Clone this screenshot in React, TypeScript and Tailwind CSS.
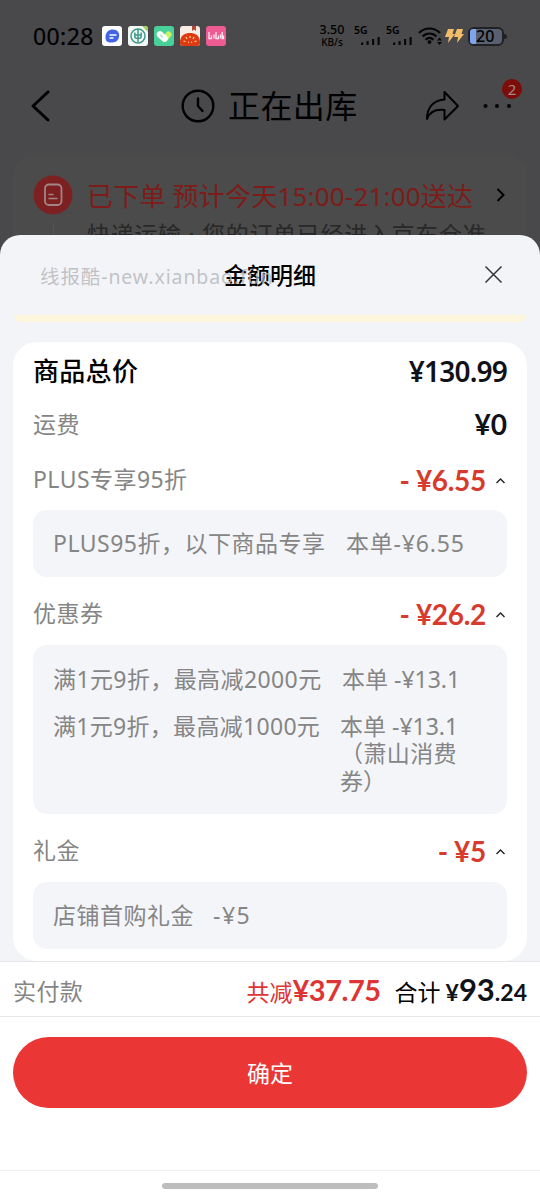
import type { ReactNode } from "react";

const base = "font-['Noto_Sans','Noto_Sans_CJK_SC',sans-serif]";

function StatusBar() {
  return (
    <div className="flex h-[72px] items-center pl-[33px] pr-[33px]">
      <span className="w-[69px] whitespace-nowrap text-[23px] font-normal leading-none tracking-[0.4px] [-webkit-text-stroke:0.2px_black]">00:28</span>
      <div className="flex gap-[6px]">
        <svg width="20" height="20" viewBox="0 0 20 20">
          <rect width="20" height="20" rx="3" fill="#fff" />
          <path d="M3.500 12C3 6 7 3.500 11 3.500s7 3 6 7.500-4 5.500-8 5.500S3.800 15 3.500 12Z" fill="#4364e4" />
          <path d="M7.500 9h7M7.500 12h4" stroke="#fff" strokeWidth="1.300" />
        </svg>
        <svg width="20" height="20" viewBox="0 0 20 20">
          <rect width="20" height="20" rx="3" fill="#f4f8f5" />
          <path d="M14 0h3a3 3 0 0 1 3 3v3Z" fill="#9bd05b" />
          <circle cx="10" cy="10" r="7" fill="none" stroke="#3d998a" strokeWidth="1.500" />
          <path d="M10 3v13M6.800 6.500v4q0 2 3.200 2t3.200-2v-4M7.500 9h5" fill="none" stroke="#3d998a" strokeWidth="1.500" />
        </svg>
        <svg width="20" height="20" viewBox="0 0 20 20">
          <rect width="20" height="20" rx="3" fill="#4ad19a" />
          <path d="m11 12.500 3.500-4" stroke="#c7f36b" strokeWidth="6" strokeLinecap="round" />
          <path d="m6 8.500 4.500 4" fill="none" stroke="#fff" strokeWidth="6.500" strokeLinecap="round" />
          <path d="m6.500 9 2 2" stroke="#a5e6cc" strokeWidth="1.200" strokeLinecap="round" />
        </svg>
        <svg width="20" height="20" viewBox="0 0 20 20">
          <rect width="20" height="20" rx="3" fill="#f6eee4" />
          <path d="M0 15C1 9 5 7 10 7s9 2 10 8v2a3 3 0 0 1-3 3H3a3 3 0 0 1-3-3Z" fill="#df3b12" />
          <path d="M12 0h4v5l-2-1.500L12 5Z" fill="#b44a35" />
          <path d="M10 10v2M6 11l1 2M14 11l-1 2M3.500 15l2 .5M16.500 15l-2 .5M8 16l1 .5M12 16l-1 .5" stroke="#ffd49a" strokeWidth="1.200" />
        </svg>
        <svg width="20" height="20" viewBox="0 0 20 20">
          <rect width="20" height="20" rx="3" fill="#ee5b93" />
          <path d="M3 6v6.500h2.500V9.500M8 8.500v4M10 6v6.500h2.500V9.500M14.500 8.500v4M16.200 6v6.500h1.300V9.500" fill="none" stroke="#ffe9f2" strokeWidth="1.300" />
        </svg>
      </div>
      <div className="ml-auto flex shrink-0 items-center">
        <div className="mr-[9px] w-[26px] text-center font-medium">
          <div className="text-[12.500px] leading-[12px]">3.50</div>
          <div className="whitespace-nowrap text-[10px] leading-[12px]">KB/s</div>
        </div>
        <Signal />
        <Signal />
        <svg width="26" height="22" viewBox="0 0 26 22" fill="none" stroke="#050505" strokeWidth="2.200">
          <path d="M1 8C7 2 16 2 22 8M4.500 11.500c4-4 10-4 14 0M7.500 14.800c2.500-2.500 5.500-2.500 8 0" />
          <circle cx="11.500" cy="17" r="1.500" fill="#050505" strokeWidth="1" />
          <path d="m19 15.500 2.500-3 2.500 3ZM19 17l2.500 3 2.500-3Z" fill="#050505" stroke="none" />
        </svg>
        <svg className="ml-[1px]" width="20" height="16" viewBox="0 0 20 16" fill="#f2bd68">
          <path d="M3 1h6L7.500 6H10L3 15l1-6H0ZM12 1h6l-1.500 5H19l-7 9 1-6H9Z" />
        </svg>
        <div className="ml-[3px] flex items-center">
          <div className="flex h-[19px] w-[36px] rounded-[6px] border-2 border-[#202124] bg-[#596070]">
            <div className="h-full w-[6px] rounded-l-[3px] bg-[#7ea4ed]" />
            <span className="text-[16px] font-medium leading-[15px]">20</span>
          </div>
          <div className="h-[5px] w-[3px] rounded-r bg-[#202124]" />
        </div>
      </div>
    </div>
  );
}

function Signal() {
  return (
    <div className="flex h-[21px] w-[32px] flex-col">
      <span className="text-[10.500px] font-semibold leading-[9px]">5G</span>
      <svg className="ml-[6px]" width="21" height="11" viewBox="0 0 21 11" fill="#080808">
        <rect x="1" y="7.500" width="2.200" height="2.500" />
        <rect x="6.500" y="6" width="2.200" height="4" />
        <rect x="12" y="4" width="2.200" height="6" />
        <rect x="17.500" y="2" width="2.200" height="8" />
      </svg>
    </div>
  );
}

function NavBar() {
  return (
    <div className="flex h-[68px] items-center pl-[29px] pr-[26px]">
      <svg width="22" height="34" viewBox="0 0 22 34" fill="none" stroke="#000" strokeWidth="3" strokeLinecap="round" strokeLinejoin="round">
        <path d="M19 3 4 17l15 14" />
      </svg>
      <svg className="ml-[130px]" width="34" height="34" viewBox="0 0 34 34" fill="none" stroke="#000" strokeWidth="2.400" strokeLinecap="round" strokeLinejoin="round">
        <circle cx="17" cy="17" r="15.300" />
        <path d="M17 9.500V17l4.500 5" />
      </svg>
      <span className="ml-[13px] w-[132px] whitespace-nowrap text-[32px] font-normal leading-none tracking-[0.4px]">正在出库</span>
      <svg className="ml-[65px]" width="36" height="34" viewBox="0 0 36 34" fill="none" stroke="#000" strokeWidth="2" strokeLinejoin="round">
        <path d="M19.500 3 33 17 19.500 30.500V21C11 20 4.500 23 2 30 2 18 9 11 19.500 10.500Z" />
      </svg>
      <div className="relative ml-auto h-[34px] w-[31px]">
        <svg width="31" height="34" viewBox="0 0 31 34">
          <circle cx="2.500" cy="17" r="2" />
          <circle cx="14" cy="17" r="2" />
          <circle cx="26" cy="17" r="2" />
        </svg>
        <span className="absolute -top-[10px] left-[19px] flex size-[20px] items-center justify-center rounded-full bg-[#7c0d08] text-[15px] leading-none text-[#a38b89]">2</span>
      </div>
    </div>
  );
}

function OrderCard() {
  return (
    <div className="mx-[13px] mt-[15px] flex h-[80px] shrink-0 overflow-hidden rounded-t-[20px] bg-[#4b4b4b]">
      <div className="flex w-[80px] shrink-0 flex-col items-center pt-[20px]">
        <svg className="shrink-0" width="40" height="40" viewBox="0 0 40 40" fill="none">
          <circle cx="20" cy="20" r="19.500" fill="#7d2022" />
          <rect x="12" y="9.500" width="16.500" height="20.500" rx="4" stroke="#a38585" strokeWidth="1.800" />
          <path d="M15.500 19.500h5M15.500 23.500h9" stroke="#a38585" strokeWidth="1.600" />
        </svg>
        <div className="mt-[7px] h-[20px] w-px shrink-0 bg-[#614d4a]" />
      </div>
      <div className="flex flex-1 flex-col whitespace-nowrap">
        <div className="mt-[20px] flex h-[40px] shrink-0 items-center pr-[22px] text-[26px] leading-none text-[#7d1c19]">
          <span className="-ml-[6px] mt-[2px] tracking-[0.200px]">已下单 预计今天15:00-21:00送达</span>
          <svg className="ml-auto" width="9" height="16" viewBox="0 0 9 16" fill="none" stroke="#000" strokeWidth="2">
            <path d="m1.500 2 6 6-6 6" />
          </svg>
        </div>
        <span className="-ml-[6px] mt-[6px] shrink-0 text-[23px] leading-[27px] tracking-[0.700px] text-[#282828]">快递运输 · 您的订单已经进入京东仓准</span>
      </div>
    </div>
  );
}

function Caret() {
  return (
    <svg className="ml-[9px] mt-[2px]" width="11" height="8" viewBox="0 0 11 8" fill="none" stroke="#222" strokeWidth="1.400">
      <path d="M1.500 6 5.500 2l4 4" />
    </svg>
  );
}

function Discount({ label, amount, className }: { label: string; amount: string; className: string }) {
  return (
    <div className={`flex items-center justify-between pr-[1px] ${className}`}>
      <span className="-mt-[1px] text-[23px] tracking-[0.450px] text-[#858585]">{label}</span>
      <div className="-mt-[1px] flex items-center font-['Lato','Noto_Sans',sans-serif] text-[28px] font-bold leading-none text-[#d63b2d]">
        <span className="mr-[6px]">-</span>
        <span className="tracking-[-0.300px]">{amount}</span>
        <Caret />
      </div>
    </div>
  );
}

function Detail({ children, className }: { children: ReactNode; className: string }) {
  return (
    <div className={`rounded-[14px] bg-[#f4f5f9] pl-[20px] text-[23px] leading-[27.500px] text-[#858585] ${className}`}>
      {children}
    </div>
  );
}

export default function App() {
  return (
    <div className={`flex h-[1200px] w-[540px] flex-col overflow-hidden bg-[#49494b] text-black ${base}`} lang="zh-CN">
      <StatusBar />
      <NavBar />
      <OrderCard />
      <div className="flex flex-1 flex-col overflow-hidden rounded-t-[20px] bg-[#f3f4f8]">
        <div className="relative flex h-[80px] items-center justify-center">
          <span className="text-[23px] font-medium">金额明细</span>
          <span className="absolute left-[40px] top-[28px] whitespace-nowrap text-[19.500px] leading-[28px] tracking-[0.900px] text-[#b4b5b9]/80">线报酷-new.xianbao.fun</span>
          <svg className="absolute right-[37px] top-[30px]" width="19" height="19" viewBox="0 0 19 19" stroke="#333" strokeWidth="1.500">
            <path d="m1.500 1.500 16 16M17.500 1.500l-16 16" />
          </svg>
        </div>
        <div className="mx-[14px] h-[7px] rounded-b-[8px] bg-[#fef6dc]" />
        <div className="mx-[13px] mt-[20px] h-[619px] rounded-[24px] bg-white px-[20px]">
          <div className="flex h-[58px] items-center justify-between">
            <span className="text-[26px] font-medium tracking-[0.300px]">商品总价</span>
            <span className="text-[28px] font-semibold tracking-[-0.800px] text-[#111218]">¥130.99</span>
          </div>
          <div className="flex h-[50px] items-center justify-between">
            <span className="-mt-[1px] text-[23px] tracking-[0.400px] text-[#858585]">运费</span>
            <span className="-mt-[2px] font-['Lato','Noto_Sans',sans-serif] text-[28px] font-bold text-[#111218]">¥0</span>
          </div>
          <Discount label="PLUS专享95折" amount="¥6.55" className="h-[60px]" />
          <Detail className="flex h-[67px] items-center whitespace-nowrap">
            <span className="w-[293px] tracking-[0.500px]">PLUS95折，以下商品专享</span>
            <span className="tracking-[0.800px]">本单-¥6.55</span>
          </Detail>
          <Discount label="优惠券" amount="¥26.2" className="h-[68px] pt-[6px]" />
          <Detail className="h-[169px] pt-[21px]">
            <div className="flex whitespace-nowrap">
              <span className="w-[289px] tracking-[0.400px]">满1元9折，最高减2000元</span>
              <span>本单 -¥13.1</span>
            </div>
            <div className="mt-[19px] flex whitespace-nowrap">
              <span className="w-[287px] tracking-[0.300px]">满1元9折，最高减1000元</span>
              <span>本单 -¥13.1<br /><span className="tracking-[0.400px]">（萧山消费</span><br />券）</span>
            </div>
          </Detail>
          <Discount label="礼金" amount="¥5" className="h-[68px] pt-[6px]" />
          <Detail className="flex h-[67px] items-center">
            <span className="w-[160px] tracking-[0.500px]">店铺首购礼金</span>
            <span className="tracking-[1.500px]">-¥5</span>
          </Detail>
        </div>
        <div className="flex flex-1 flex-col bg-white">
          <div className="flex h-[56px] items-center border-y-[1.500px] border-[#e6e7ea] px-[13px]">
            <span className="mt-[4px] text-[23px] tracking-[0.400px] text-[#858585]">实付款</span>
            <div className="ml-auto mt-px flex items-baseline leading-none">
              <span className="text-[23px] text-[#df3434]">共减</span>
              <span className="font-['Lato','Noto_Sans',sans-serif] text-[29px] font-bold tracking-[-0.500px] text-[#df3434]">¥37.75</span>
              <span className="ml-[14px] text-[23px]">合计</span>
              <span className="ml-[5px] font-['Lato','Noto_Sans',sans-serif] text-[23px] font-bold text-[#111218]">¥</span>
              <span className="font-['Lato','Noto_Sans',sans-serif] text-[31px] font-bold text-[#111218]">93</span>
              <span className="font-['Lato','Noto_Sans',sans-serif] text-[23px] font-bold text-[#111218]">.24</span>
            </div>
          </div>
          <button className="mx-[13px] mt-[20px] h-[71px] rounded-full bg-[#ea3635] pt-[2px] text-[23px] text-white">确定</button>
          <div className="mt-[62px] flex h-[30px] justify-center border-t border-[#f0f0f1] pt-[12px]">
            <div className="h-[6px] w-[216px] rounded-full bg-[#bdbdbd]" />
          </div>
        </div>
      </div>
    </div>
  );
}
